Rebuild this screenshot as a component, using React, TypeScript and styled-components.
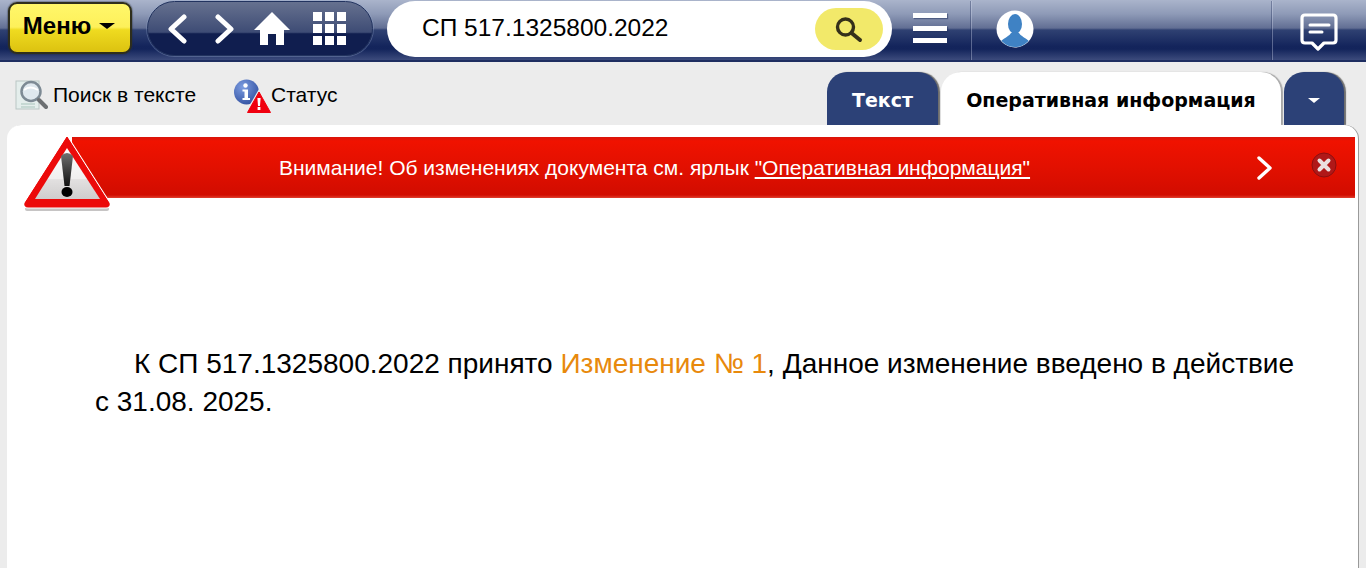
import React from 'react';
import styled, { createGlobalStyle } from 'styled-components';

const GlobalStyle = createGlobalStyle`
    html, body {
        margin: 0;
        padding: 0;
        height: 100%;
        overflow: hidden;
        background: #ececec;
        font-family: "Liberation Sans", Arial, sans-serif;
        color: #000;
    }
    #root { height: 100%; }
`;

const Page = styled.div`
    display: flex;
    flex-direction: column;
    height: 568px;
    width: 1366px;
`;

const Header = styled.header`
    flex: none;
    height: 62px;
    box-sizing: border-box;
    display: flex;
    align-items: flex-start;
    padding: 1px 0 0 8px;
    border-bottom: 2px solid #1d2d60;
    background: linear-gradient(
        to bottom,
        #aab4cb 0,
        #8e9ab7 14px,
        #626f94 28px,
        #2f4172 30px,
        #14255c 46px,
        #13245b 49px,
        #3c4b7c 60px
    );
`;

const MenuButton = styled.button`
    width: 124px;
    height: 52px;
    margin-top: 1px;
    box-sizing: border-box;
    border: 2px solid #2e2e1c;
    border-radius: 9px;
    padding: 0 2px 4px 0;
    display: flex;
    align-items: center;
    justify-content: center;
    gap: 8px;
    font: bold 24px "Liberation Sans", Arial, sans-serif;
    color: #000;
    background: linear-gradient(to bottom, #fff76a 0, #fdf05a 48%, #efdb20 54%, #dcc210 100%);
    box-shadow: 0 0 1px 1px rgba(40, 45, 60, 0.35);
`;

const Caret = styled.span<{ $color: string; $w: number }>`
    display: block;
    width: 0;
    height: 0;
    border-left: ${(p) => p.$w}px solid transparent;
    border-right: ${(p) => p.$w}px solid transparent;
    border-top: ${(p) => Math.round(p.$w * 0.75)}px solid ${(p) => p.$color};
`;

const NavPill = styled.nav`
    width: 226px;
    height: 55px;
    margin-left: 15px;
    box-sizing: border-box;
    padding: 0 0 0 20px;
    display: flex;
    align-items: center;
    border: 1.5px solid #22335f;
    border-radius: 28px;
    background: linear-gradient(to bottom, #66718f 0, #3e4c75 57%, #101e4f 60%, #101e4f 100%);
    box-shadow: 0 0 0 1px rgba(150, 165, 200, 0.35);
`;

const NavGlyph = styled.svg<{ $before: number }>`
    flex: none;
    margin-left: ${(p) => p.$before}px;
`;

const SearchBox = styled.div`
    width: 505px;
    height: 56px;
    margin-left: 14px;
    box-sizing: border-box;
    display: flex;
    align-items: center;
    justify-content: space-between;
    padding: 0 9px 2px 35px;
    background: #fff;
    border-radius: 28px;
    font-size: 24.5px;
    color: #000;
`;

const SearchButton = styled.div`
    width: 68px;
    height: 42px;
    margin-top: 2px;
    display: flex;
    align-items: center;
    justify-content: center;
    background: #f2e96a;
    border-radius: 21px;
`;

const Burger = styled.div`
    width: 34px;
    margin: 12px 0 0 21px;
    display: flex;
    flex-direction: column;
    gap: 7.5px;
`;

const BurgerLine = styled.span`
    display: block;
    height: 5px;
    background: #fff;
    box-shadow: 1px 1px 1px rgba(30, 45, 90, 0.5);
`;

const Divider = styled.div<{ $left: number }>`
    width: 1px;
    height: 59px;
    margin-left: ${(p) => p.$left}px;
    background: rgba(215, 222, 240, 0.35);
    box-shadow: -1px 0 0 rgba(20, 35, 80, 0.35);
`;

const Avatar = styled.div`
    width: 38px;
    height: 38px;
    margin: 9px 0 0 24px;
    flex: none;
`;

const ChatIcon = styled.div`
    width: 38px;
    height: 38px;
    margin: 12px 0 0 27px;
    flex: none;
`;

const Toolbar = styled.div`
    flex: none;
    height: 63px;
    display: flex;
    justify-content: space-between;
    align-items: flex-end;
    padding: 0 22px 0 15px;
    background: #ececec;
`;

const Tools = styled.div`
    display: flex;
    align-self: flex-start;
    margin-top: 15px;
    gap: 38px;
`;

const Tool = styled.div<{ $gap: number }>`
    display: flex;
    align-items: center;
    gap: ${(p) => p.$gap}px;
    height: 36px;
    font-size: 21px;
`;

const Tabs = styled.div`
    display: flex;
    gap: 3px;
    height: 53px;
`;

const Tab = styled.div<{ $active?: boolean; $width: number }>`
    width: ${(p) => p.$width}px;
    box-sizing: border-box;
    padding-top: 3px;
    display: flex;
    align-items: center;
    justify-content: center;
    border-radius: 20px 20px 0 0;
    font: bold 19px "DejaVu Sans", Verdana, sans-serif;
    background: ${(p) => (p.$active ? '#fff' : '#2c4177')};
    color: ${(p) => (p.$active ? '#000' : '#fff')};
    box-shadow: 2px 0 1px ${(p) => (p.$active ? '#a8a8a8' : '#6e6e6e')};
`;

const Content = styled.main`
    flex: 1;
    margin: 0 8px 0 7px;
    padding-top: 12px;
    position: relative;
    background: #fff;
    border-radius: 14px 14px 0 0;
    box-shadow: 1px 0 0 #9a9a9a;
    overflow: hidden;
`;

const Banner = styled.div`
    height: 61px;
    margin: 0 3px 0 65px;
    display: flex;
    align-items: center;
    background: linear-gradient(to bottom, #d8140a 0, #f01200 4px, #e21000 30px, #d20c00 58px, #e04030 61px);
    color: #fff;
    font-size: 21px;
`;

const BannerText = styled.div`
    margin-left: 207px;
    width: 751px;
    white-space: nowrap;
    a {
        color: #fff;
        text-decoration: underline;
    }
`;

const BannerArrow = styled.div`
    margin-left: 226px;
    width: 18px;
    height: 24px;
`;

const CloseDot = styled.div`
    margin-left: 37px;
    width: 26px;
    height: 26px;
    margin-top: -6px;
`;

const WarningSign = styled.div`
    position: absolute;
    left: 16px;
    top: 10px;
    width: 88px;
    height: 78px;
`;

const Article = styled.p`
    margin: 147px 63px 0 88px;
    font-size: 28px;
    line-height: 38px;
    text-indent: 39px;
`;

const ChangeLink = styled.span`
    color: #e8890c;
`;

const navIcon = { fill: 'none', stroke: '#fff', strokeWidth: 5, strokeLinecap: 'round', strokeLinejoin: 'round' } as const;

const App = () => (
    <Page>
        <GlobalStyle />
        <Header>
            <MenuButton>
                Меню
                <Caret $color="#000" $w={8} />
            </MenuButton>
            <NavPill>
                <NavGlyph $before={0} width="19" height="30" viewBox="0 0 19 30">
                    <path d="M16 3 L3 15 L16 27" {...navIcon} />
                </NavGlyph>
                <NavGlyph $before={28} width="19" height="30" viewBox="0 0 19 30">
                    <path d="M3 3 L16 15 L3 27" {...navIcon} />
                </NavGlyph>
                <NavGlyph $before={20} width="36" height="34" viewBox="0 0 36 34">
                    <path d="M18 0 L36 18 H30 V33 H22 V22 H14 V33 H6 V18 H0 Z" fill="#fff" />
                </NavGlyph>
                <NavGlyph $before={23} width="33" height="33" viewBox="0 0 33 33" fill="#fff">
                    <rect x="0" y="0" width="9" height="9" />
                    <rect x="12" y="0" width="9" height="9" />
                    <rect x="24" y="0" width="9" height="9" />
                    <rect x="0" y="12" width="9" height="9" />
                    <rect x="12" y="12" width="9" height="9" />
                    <rect x="24" y="12" width="9" height="9" />
                    <rect x="0" y="24" width="9" height="9" />
                    <rect x="12" y="24" width="9" height="9" />
                    <rect x="24" y="24" width="9" height="9" />
                </NavGlyph>
            </NavPill>
            <SearchBox>
                СП 517.1325800.2022
                <SearchButton>
                    <svg width="28" height="28" viewBox="0 0 28 28" fill="none" stroke="#35301a">
                        <circle cx="10.5" cy="12" r="8" strokeWidth="3.4" />
                        <path d="M16.5 18 L25 25" strokeWidth="4" strokeLinecap="round" />
                    </svg>
                </SearchButton>
            </SearchBox>
            <Burger>
                <BurgerLine />
                <BurgerLine />
                <BurgerLine />
            </Burger>
            <Divider $left={24} />
            <Avatar>
                <svg width="38" height="38" viewBox="0 0 38 38">
                    <defs>
                        <clipPath id="avatarClip">
                            <circle cx="19" cy="19" r="18" />
                        </clipPath>
                    </defs>
                    <circle cx="19" cy="19" r="18.5" fill="#fff" />
                    <g clipPath="url(#avatarClip)" fill="#3f82c4">
                        <ellipse cx="19" cy="14" rx="7" ry="10" />
                        <path d="M1 38 C3 29 12 28 15 23 H23 C26 28 35 29 37 38 Z" />
                    </g>
                </svg>
            </Avatar>
            <Divider $left={238} />
            <ChatIcon>
                <svg width="38" height="38" viewBox="0 0 38 38" fill="none" stroke="#fff" strokeLinecap="round" strokeLinejoin="round">
                    <path d="M5 2 H33 Q36 2 36 5 V27 Q36 30 33 30 H24 L18 36 L12 30 H5 Q2 30 2 27 V5 Q2 2 5 2 Z" strokeWidth="3.2" />
                    <path d="M10 12 H29" strokeWidth="3" />
                    <path d="M10 19 H22" strokeWidth="3" />
                </svg>
            </ChatIcon>
        </Header>
        <Toolbar>
            <Tools>
                <Tool $gap={5}>
                    <svg width="33" height="33" viewBox="0 0 33 33">
                        <rect x="1" y="2" width="23" height="28" fill="#e4eeec" stroke="#b9c6c4" />
                        <path d="M6 25 H20 M6 28 H20" stroke="#a9c4bb" />
                        <circle cx="16" cy="12.5" r="9.5" fill="#dfe8ee" stroke="#7d8a94" strokeWidth="2.5" />
                        <path d="M9 11 Q15 6 23 11" fill="none" stroke="#fff" strokeWidth="2" />
                        <path d="M24 21 L31 28" stroke="#6c6f72" strokeWidth="4" strokeLinecap="round" />
                    </svg>
                    Поиск в тексте
                </Tool>
                <Tool $gap={0}>
                    <svg width="37" height="36" viewBox="0 0 37 36">
                        <defs>
                            <radialGradient id="infoFill" cx="35%" cy="30%" r="75%">
                                <stop offset="0" stopColor="#7c9ce0" />
                                <stop offset="1" stopColor="#3352a2" />
                            </radialGradient>
                        </defs>
                        <circle cx="12.5" cy="15" r="12.5" fill="url(#infoFill)" />
                        <circle cx="11.5" cy="8.5" r="2.2" fill="#fff" />
                        <path d="M8.5 12.5 H14 V21 H16 V23 H8.5 V21 H10.5 V14.5 H8.5 Z" fill="#fff" />
                        <path d="M25 12 L38 36 H11 Z" fill="#ececec" />
                        <path d="M25 15 L36.5 35.5 H13.5 Z" fill="#f0000f" stroke="#f0000f" strokeWidth="1" strokeLinejoin="round" />
                        <path d="M23.4 21 H26.6 L26 29 H24 Z M23.6 30 H26.4 V33 H23.6 Z" fill="#fff" />
                    </svg>
                    Статус
                </Tool>
            </Tools>
            <Tabs>
                <Tab $width={111}>Текст</Tab>
                <Tab $active $width={340}>Оперативная информация</Tab>
                <Tab $width={60}>
                    <Caret $color="#fff" $w={6} />
                </Tab>
            </Tabs>
        </Toolbar>
        <Content>
            <Banner>
                <BannerText>
                    Внимание! Об изменениях документа см. ярлык <a>"Оперативная информация"</a>
                </BannerText>
                <BannerArrow>
                    <svg width="18" height="24" viewBox="0 0 18 24">
                        <path d="M3 2 L14 12 L3 22" fill="none" stroke="#fff" strokeWidth="3.4" strokeLinecap="round" strokeLinejoin="round" />
                    </svg>
                </BannerArrow>
                <CloseDot>
                    <svg width="26" height="26" viewBox="0 0 26 26">
                        <circle cx="13" cy="13" r="12" fill="#b01818" stroke="#8c1010" />
                        <path d="M8.5 8.5 L17.5 17.5 M17.5 8.5 L8.5 17.5" stroke="#ece0e0" strokeWidth="4" strokeLinecap="round" />
                    </svg>
                </CloseDot>
            </Banner>
            <WarningSign>
                <svg width="88" height="78" viewBox="0 0 88 78">
                    <defs>
                        <linearGradient id="signFace" x1="0" y1="0" x2="0" y2="1">
                            <stop offset="0" stopColor="#ffffff" />
                            <stop offset="0.6" stopColor="#f0efef" />
                            <stop offset="0.62" stopColor="#e2e0e0" />
                            <stop offset="1" stopColor="#cfcdcd" />
                        </linearGradient>
                        <linearGradient id="markFill" x1="0" y1="0" x2="0" y2="1">
                            <stop offset="0" stopColor="#707070" />
                            <stop offset="1" stopColor="#111" />
                        </linearGradient>
                    </defs>
                    <path d="M2 70 H86 V74 Q86 76 84 76 H4 Q2 76 2 74 Z" fill="#c6c4c4" />
                    <path d="M44 2 L86 68 Q87 72 83 72 H5 Q1 72 2 68 Z" fill="#ec0a0a" stroke="#fff" strokeWidth="3" strokeLinejoin="round" paintOrder="stroke" />
                    <path d="M44 2 L86 68 Q87 72 83 72 H5 Q1 72 2 68 Z" fill="#ec0a0a" stroke="#ec0a0a" strokeWidth="1" strokeLinejoin="round" />
                    <path d="M44 13 L77 64 H12 Z" fill="url(#signFace)" />
                    <path d="M38 21 Q44 15 50 21 L46.5 51 H41.5 Z" fill="url(#markFill)" />
                    <ellipse cx="44" cy="57" rx="5.5" ry="5" fill="#000" />
                </svg>
            </WarningSign>
            <Article>
                К СП 517.1325800.2022 принято <ChangeLink>Изменение № 1</ChangeLink>, Данное изменение введено в действие с 31.08. 2025.
            </Article>
        </Content>
    </Page>
);

export default App;
